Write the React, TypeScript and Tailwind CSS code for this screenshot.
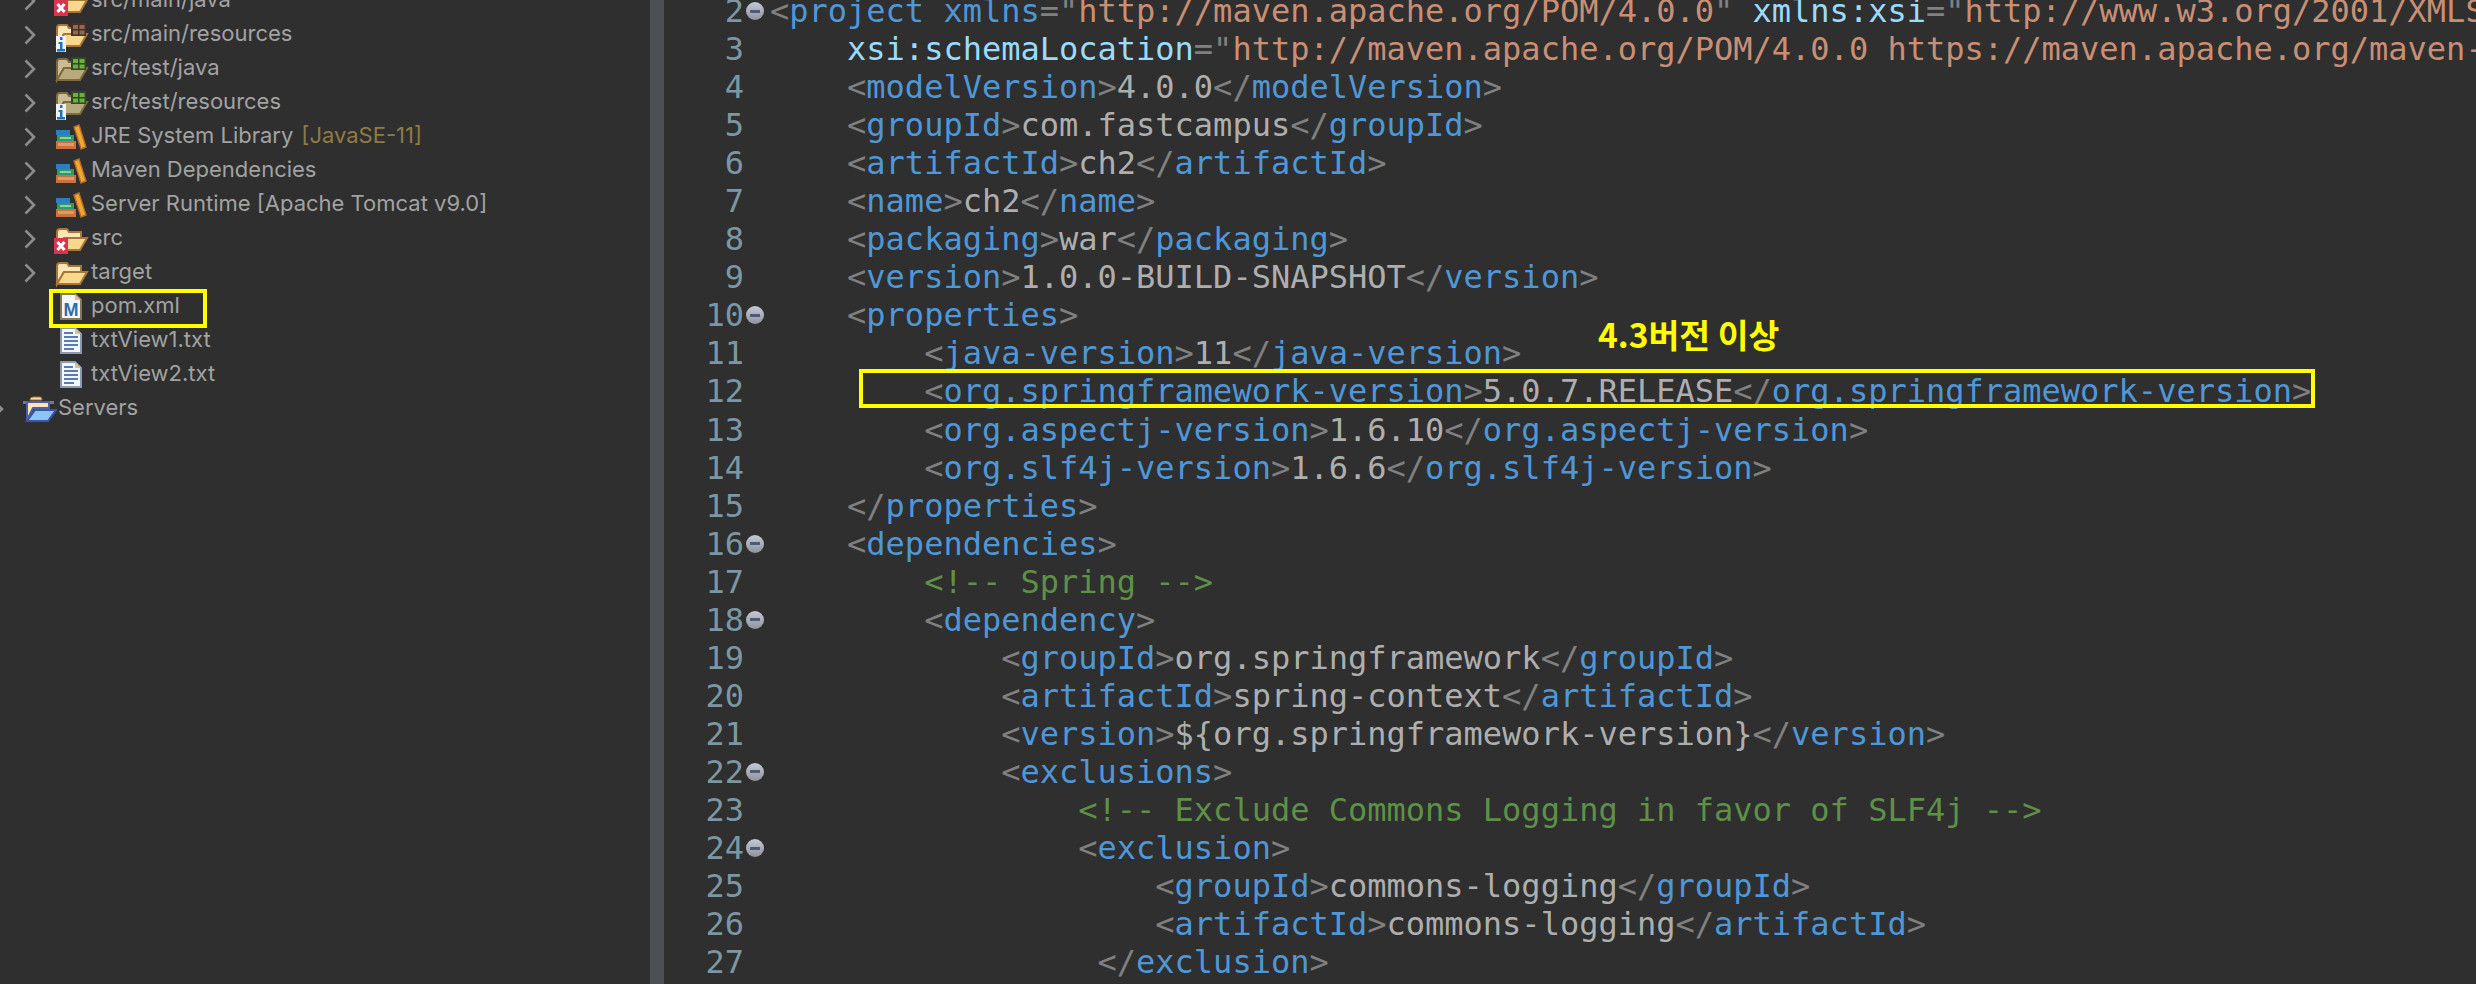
import type { ReactNode } from "react";

const mono = "font-['DejaVu_Sans_Mono','Liberation_Mono',monospace]";

const tokenColors = {
  bracket: "text-[#808080]",
  tag: "text-[#4f97d7]",
  attr: "text-[#9bdcfe]",
  string: "text-[#c98f75]",
  value: "text-[#aeaeae]",
  comment: "text-[#5f9048]",
};

type TokenKind = keyof typeof tokenColors;

const codeLines: { text: string; fold?: boolean }[] = [
  {
    text: '<project xmlns="http://maven.apache.org/POM/4.0.0" xmlns:xsi="http://www.w3.org/2001/XMLSchema-instance"',
    fold: true,
  },
  { text: '    xsi:schemaLocation="http://maven.apache.org/POM/4.0.0 https://maven.apache.org/maven-v4_0_0.xsd">' },
  { text: "    <modelVersion>4.0.0</modelVersion>" },
  { text: "    <groupId>com.fastcampus</groupId>" },
  { text: "    <artifactId>ch2</artifactId>" },
  { text: "    <name>ch2</name>" },
  { text: "    <packaging>war</packaging>" },
  { text: "    <version>1.0.0-BUILD-SNAPSHOT</version>" },
  { text: "    <properties>", fold: true },
  { text: "        <java-version>11</java-version>" },
  { text: "        <org.springframework-version>5.0.7.RELEASE</org.springframework-version>" },
  { text: "        <org.aspectj-version>1.6.10</org.aspectj-version>" },
  { text: "        <org.slf4j-version>1.6.6</org.slf4j-version>" },
  { text: "    </properties>" },
  { text: "    <dependencies>", fold: true },
  { text: "        <!-- Spring -->" },
  { text: "        <dependency>", fold: true },
  { text: "            <groupId>org.springframework</groupId>" },
  { text: "            <artifactId>spring-context</artifactId>" },
  { text: "            <version>${org.springframework-version}</version>" },
  { text: "            <exclusions>", fold: true },
  { text: "                <!-- Exclude Commons Logging in favor of SLF4j -->" },
  { text: "                <exclusion>", fold: true },
  { text: "                    <groupId>commons-logging</groupId>" },
  { text: "                    <artifactId>commons-logging</artifactId>" },
  { text: "                 </exclusion>" },
];

// small xml colouring, only has to cope with the lines above
function tokenize(line: string): [TokenKind, string][] {
  if (line.trim().startsWith("<!--")) return [["comment", line]];
  const out: [TokenKind, string][] = [];
  const re = /<\/?|\/?>|"[^"]*"|=|[^<>="]+/g;
  let inTag = line.startsWith("    xsi:");
  let nameDone = inTag;
  for (const part of line.match(re) ?? []) {
    if (part === "<" || part === "</") {
      out.push(["bracket", part]);
      inTag = true;
      nameDone = false;
    } else if (part === ">" || part === "/>") {
      out.push(["bracket", part]);
      inTag = false;
    } else if (part === "=") {
      out.push(["bracket", part]);
    } else if (part.startsWith('"')) {
      out.push(["bracket", '"']);
      out.push(["string", part.slice(1, -1)]);
      out.push(["bracket", '"']);
    } else if (inTag && !nameDone) {
      out.push(["tag", part]);
      nameDone = true;
    } else if (inTag) {
      out.push(["attr", part]);
    } else {
      out.push(["value", part]);
    }
  }
  return out;
}

function Chevron() {
  return (
    <svg width="12" height="20" viewBox="0 0 12 20" fill="none" stroke="#8c8c8c" strokeWidth="2.6">
      <path d="M1.5 1.5 L10 10 L1.5 18.5" />
    </svg>
  );
}

function IconBox({ children }: { children: ReactNode }) {
  return (
    <svg width="36" height="34" viewBox="0 0 36 34" className="shrink-0">
      {children}
    </svg>
  );
}

function OpenFolder({ khaki }: { khaki?: boolean }) {
  const line = khaki ? "#7d6a3d" : "#a8753a";
  const back = khaki ? "#c9bd98" : "#fbe6b8";
  const front = khaki ? "#b8aa80" : "#f8d88e";
  return (
    <g stroke={line} strokeWidth="2">
      <path d="M3 28 V10 Q3 7 6 7 H13 L15 10 H27 V16 H10 Z" fill={back} />
      <path d="M3 28 L10 16 H33 L26 28 Z" fill={front} />
    </g>
  );
}

function Package({ color, light }: { color: string; light: string }) {
  return (
    <g>
      <rect x="17" y="5" width="15" height="13" fill={color} />
      <rect x="19" y="7" width="5" height="4" fill={light} />
      <rect x="25.5" y="7" width="5" height="4" fill={light} />
      <rect x="19" y="12.5" width="5" height="4" fill={light} />
      <rect x="25.5" y="12.5" width="5" height="4" fill={light} />
    </g>
  );
}

function InfoBadge() {
  return (
    <g>
      <rect x="2" y="18" width="10" height="16" fill="#f2f2f2" />
      <rect x="6" y="19" width="2.5" height="3" fill="#1c75bc" />
      <path d="M4.5 24 H8.5 V31 H11 V33.5 H3 V31 H6 V26 H4.5 Z" fill="#1c75bc" />
    </g>
  );
}

function ErrorBadge() {
  return (
    <g>
      <rect x="0" y="16" width="14" height="16" fill="#d9344f" />
      <path d="M3.5 20 L10.5 28 M10.5 20 L3.5 28" stroke="#fff" strokeWidth="3" />
    </g>
  );
}

function Books() {
  return (
    <IconBox>
      <rect x="2" y="10" width="14" height="5" fill="#2b7fc0" />
      <rect x="3" y="15" width="17" height="6" fill="#2f9a68" />
      <rect x="6" y="17" width="11" height="2" fill="#8fd0a0" />
      <rect x="2" y="21" width="20" height="8" fill="#c9713f" />
      <rect x="4" y="23" width="16" height="3" fill="#dd9a68" />
      <path d="M20 7 L25 5 L32 27 L27 29 Z" fill="#eda92e" stroke="#b9672c" strokeWidth="1.4" />
    </IconBox>
  );
}

function DocIcon({ maven }: { maven?: boolean }) {
  return (
    <IconBox>
      <path
        d="M7 4 H21 L27 10 V29 H7 Z"
        fill="#f3f6fc"
        stroke={maven ? "#847a50" : "#8c99b0"}
        strokeWidth="2"
      />
      <path d="M21 4 L27 10 H21 Z" fill="#d9c490" />
      {maven ? (
        <text
          x="17"
          y="26"
          textAnchor="middle"
          fontSize="18"
          fontWeight="700"
          fontFamily="Liberation Sans, sans-serif"
          fill="#2d6fa8"
        >
          M
        </text>
      ) : (
        <path
          d="M10 9 H19 M10 13 H24 M10 17 H24 M10 21 H24 M10 25 H20"
          stroke="#5a7ab4"
          strokeWidth="2"
        />
      )}
    </IconBox>
  );
}

function ServersIcon() {
  return (
    <IconBox>
      <path d="M2 9 H33 V12 H2 Z" fill="#7a7488" />
      <path d="M9 8 Q9 5 12 5 H19 Q21 5 21 8 Z" fill="#f4dca8" stroke="#a8753a" />
      <path d="M6 28 V10 H28 V16 H12 Z" fill="#fbe6b0" stroke="#4a5fae" strokeWidth="2" />
      <path d="M6 29 L14 18 H35 L27 29 Z" fill="#8cc4f4" stroke="#3c55a8" strokeWidth="2" />
    </IconBox>
  );
}

const treeRows: { label: string; decoration?: string; icon: ReactNode; chevron?: boolean }[] = [
  {
    label: "src/main/java",
    chevron: true,
    icon: (
      <IconBox>
        <OpenFolder />
        <ErrorBadge />
      </IconBox>
    ),
  },
  {
    label: "src/main/resources",
    chevron: true,
    icon: (
      <IconBox>
        <OpenFolder />
        <Package color="#4a2e24" light="#8a6a58" />
        <InfoBadge />
      </IconBox>
    ),
  },
  {
    label: "src/test/java",
    chevron: true,
    icon: (
      <IconBox>
        <OpenFolder khaki />
        <Package color="#2d4a22" light="#6fae3c" />
      </IconBox>
    ),
  },
  {
    label: "src/test/resources",
    chevron: true,
    icon: (
      <IconBox>
        <OpenFolder khaki />
        <Package color="#2d4a22" light="#6fae3c" />
        <InfoBadge />
      </IconBox>
    ),
  },
  { label: "JRE System Library", decoration: "[JavaSE-11]", chevron: true, icon: <Books /> },
  { label: "Maven Dependencies", chevron: true, icon: <Books /> },
  { label: "Server Runtime [Apache Tomcat v9.0]", chevron: true, icon: <Books /> },
  {
    label: "src",
    chevron: true,
    icon: (
      <IconBox>
        <OpenFolder />
        <ErrorBadge />
      </IconBox>
    ),
  },
  {
    label: "target",
    chevron: true,
    icon: (
      <IconBox>
        <OpenFolder />
      </IconBox>
    ),
  },
  { label: "pom.xml", icon: <DocIcon maven /> },
  { label: "txtView1.txt", icon: <DocIcon /> },
  { label: "txtView2.txt", icon: <DocIcon /> },
];

function TreeLabel({ label, decoration }: { label: string; decoration?: string }) {
  return (
    <span className="ml-px pb-[3px] whitespace-nowrap text-[22px] text-[#a2a2a2]">
      {label}
      {decoration && <span className="ml-2 text-[#8f7a45]">{decoration}</span>}
    </span>
  );
}

function FoldIcon() {
  return (
    <div className="flex h-[18px] w-[18px] items-center justify-center rounded-full bg-gradient-to-b from-[#c4cad6] to-[#8f939c]">
      <div className="h-[3px] w-[10px] bg-[#4f5b75]" />
    </div>
  );
}

export default function App() {
  return (
    <div className="relative flex h-[984px] w-full overflow-hidden bg-[#2f2f2f] font-['Inter','Liberation_Sans',sans-serif]">
      {/* package explorer */}
      <div className="-mt-[16px] w-[650px] shrink-0">
        {treeRows.map((row) => (
          <div key={row.label} className="flex h-[34px] items-center pl-[24px]">
            <div className="w-[30px] shrink-0">{row.chevron && <Chevron />}</div>
            {row.icon}
            <TreeLabel label={row.label} decoration={row.decoration} />
          </div>
        ))}
        <div className="-ml-[8px] flex h-[34px] items-center">
          <div className="w-[29px] shrink-0">
            <Chevron />
          </div>
          <ServersIcon />
          <TreeLabel label="Servers" />
        </div>
      </div>

      {/* sash */}
      <div className="w-[14px] shrink-0 bg-[#4a5053]" />

      {/* pom.xml editor */}
      <div className={`-mt-[8px] min-w-0 flex-1 text-[32px] leading-[38.05px] ${mono}`}>
        {codeLines.map((line, i) => (
          <div key={i} className="flex h-[38.05px] items-center whitespace-pre">
            <div className="w-[80px] shrink-0 text-right text-[#7c97a3]">{i + 2}</div>
            <div className="flex w-[26px] shrink-0 justify-center pr-[6px] pl-[2px]">
              {line.fold && <FoldIcon />}
            </div>
            <div>
              {tokenize(line.text).map(([kind, text], j) => (
                <span key={j} className={tokenColors[kind]}>
                  {text}
                </span>
              ))}
            </div>
          </div>
        ))}
      </div>

      {/* annotations drawn over the screenshot */}
      <div className="absolute top-[289px] left-[49px] h-[39px] w-[158px] border-[4px] border-[#ffff00]" />
      <div className="absolute top-[369px] left-[859px] h-[39px] w-[1456px] border-[4px] border-[#ffff00]" />
      <div className="absolute top-[314px] left-[1598px] font-['Noto_Sans_CJK_KR',sans-serif] text-[33.5px] leading-[40px] font-bold whitespace-nowrap text-[#ffff00]">
        4.3버전 이상
      </div>
    </div>
  );
}
